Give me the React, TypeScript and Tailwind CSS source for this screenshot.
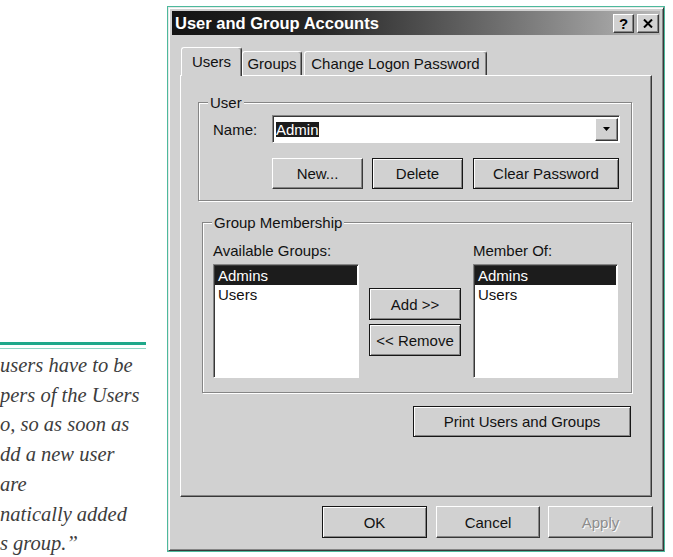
import type { ReactNode } from "react";

const raised =
  "border border-t-white border-l-white border-r-[#383838] border-b-[#383838] shadow-[inset_-1px_-1px_0_#858585]";
const framed =
  "border border-[#161616] shadow-[inset_1px_1px_0_#fff,inset_-1px_-1px_0_#858585]";
const sunken =
  "border border-t-[#858585] border-l-[#858585] border-r-white border-b-white shadow-[inset_1px_1px_0_#383838]";
const etched = "border border-[#858585] shadow-[inset_1px_1px_0_#fff,1px_1px_0_#fff]";

const quote = [
  "users have to be",
  "pers of the Users",
  "o, so as soon as",
  "dd a new user",
  "are",
  "natically added",
  "s group.\u201d",
];

function Button({
  children,
  dark,
  disabled,
  className = "",
}: {
  children: ReactNode;
  dark?: boolean;
  disabled?: boolean;
  className?: string;
}) {
  return (
    <button
      type="button"
      className={`flex shrink-0 items-center justify-center bg-[#d1d1d1] text-[15px] leading-[17px] ${
        dark ? framed : raised
      } ${disabled ? "text-[#8d8d8d] [text-shadow:1px_1px_0_#fff]" : "text-[#111]"} ${className}`}
    >
      {children}
    </button>
  );
}

function GroupBox({ label, className = "", children }: { label: string; className?: string; children: ReactNode }) {
  return (
    <div className={`relative shrink-0 ${etched} ${className}`}>
      <span className="absolute -top-[9px] left-[9px] bg-[#d1d1d1] px-[2px] leading-[17px]">{label}</span>
      {children}
    </div>
  );
}

function ListBox({ className = "" }: { className?: string }) {
  return (
    <div className={`h-[114px] bg-white p-px ${sunken} ${className}`}>
      <div className="h-[19px] bg-[#1c1c1c] pl-[3px] leading-[19px] text-white">Admins</div>
      <div className="h-[19px] pl-[3px] leading-[19px]">Users</div>
    </div>
  );
}

export default function App() {
  return (
    <div className="flex h-[557px] w-[673px] overflow-hidden bg-white font-['Liberation_Sans',Arial,sans-serif]">
      {/* side quote */}
      <div className="w-[167px] shrink-0 overflow-hidden pt-[342px]">
        <div className="h-[3px] w-[146px] bg-[#1fa88a]" />
        <div className="mt-[3px] h-px w-[146px] bg-[#8fd7c5]" />
        <div className="mt-[2px] whitespace-nowrap font-['Liberation_Serif',serif] text-[20.5px] leading-[29.7px] italic text-[#3d3d3d]">
          {quote.map((line) => (
            <div key={line}>{line}</div>
          ))}
        </div>
      </div>

      {/* dialog */}
      <div className="mt-[6px] h-[546px] w-[498px] shrink-0 border border-[#4db99c]">
        <div className="flex h-full flex-col border border-t-[#e9e9e9] border-l-[#e9e9e9] border-r-[#383838] border-b-[#383838] bg-[#d1d1d1] p-[3px] text-[15px] leading-[17px] text-[#111] shadow-[inset_1px_1px_0_#fff,inset_-1px_-1px_0_#858585]">
          {/* title bar */}
          <div className="flex h-[24px] shrink-0 items-center bg-linear-to-r from-[#141414] via-[#262626] via-30% to-[#b8b8b8] pl-[3px] pr-[1px]">
            <span className="text-[16.5px] font-bold leading-none text-white">User and Group Accounts</span>
            <div className="ml-auto flex gap-[3px]">
              <div className={`flex h-[19px] w-[21px] items-center justify-center bg-[#d1d1d1] ${raised}`}>
                <span className="text-[15px] font-bold leading-none text-black">?</span>
              </div>
              <div className={`flex h-[19px] w-[22px] items-center justify-center bg-[#d1d1d1] ${raised}`}>
                <svg width="10" height="9" viewBox="0 0 10 9">
                  <path d="M1 0.5 L9 8.5 M9 0.5 L1 8.5" stroke="#000" strokeWidth="2" />
                </svg>
              </div>
            </div>
          </div>

          <div className="mt-3 flex flex-col px-2">
            {/* tabs */}
            <div className="relative z-10 flex h-[28px] items-end pl-px">
              <div className="-mb-px flex h-[29px] w-[61px] items-center justify-center rounded-t-[3px] border border-b-0 border-t-white border-l-white border-r-[#383838] bg-[#d1d1d1] pb-[2px] shadow-[inset_-1px_0_0_#858585]">
                Users
              </div>
              <div className="flex h-[24px] w-[60px] items-center justify-center rounded-t-[3px] border border-b-0 border-t-white border-l-white border-r-[#383838] shadow-[inset_-1px_0_0_#858585]">
                Groups
              </div>
              <div className="ml-[2px] flex h-[24px] w-[183px] items-center justify-center rounded-t-[3px] border border-b-0 border-t-white border-l-white border-r-[#383838] shadow-[inset_-1px_0_0_#858585]">
                Change Logon Password
              </div>
            </div>

            {/* panel */}
            <div className={`flex h-[422px] flex-col ${raised}`}>
              <GroupBox label="User" className="ml-[17px] mt-[26px] h-[99px] w-[434px] pl-[14px] pt-[12px]">
                <div className="flex items-center">
                  <span className="w-[59px]">Name:</span>
                  <div className={`flex h-[28px] w-[348px] items-center bg-white p-px ${sunken}`}>
                    <span className="ml-[2px] bg-[#1c1c1c] leading-[15px] text-white">Admin</span>
                    <div className={`ml-auto flex h-[23px] w-[23px] items-center justify-center bg-[#d1d1d1] ${raised}`}>
                      <svg width="7" height="4" viewBox="0 0 7 4">
                        <path d="M0 0h7L3.5 4z" fill="#000" />
                      </svg>
                    </div>
                  </div>
                </div>
                <div className="ml-[59px] mt-[15px] flex">
                  <Button className="h-[31px] w-[91px]">New...</Button>
                  <Button dark className="ml-[9px] h-[31px] w-[91px]">Delete</Button>
                  <Button dark className="ml-[10px] h-[31px] w-[146px]">Clear Password</Button>
                </div>
              </GroupBox>

              <GroupBox label="Group Membership" className="ml-[21px] mt-[21px] h-[171px] w-[430px] pl-[10px] pt-[19px]">
                <div className="flex">
                  <div className="w-[146px]">
                    <div>Available Groups:</div>
                    <ListBox className="mt-[5px]" />
                  </div>
                  <div className="ml-[10px] mt-[46px] flex w-[92px] flex-col gap-[4px]">
                    <Button dark className="h-[32px] w-[92px]">Add &gt;&gt;</Button>
                    <Button dark className="h-[32px] w-[92px]">&lt;&lt; Remove</Button>
                  </div>
                  <div className="ml-[12px] w-[145px]">
                    <div>Member Of:</div>
                    <ListBox className="mt-[5px]" />
                  </div>
                </div>
              </GroupBox>

              <div className="mt-[13px] flex justify-end pr-[20px]">
                <Button dark className="h-[31px] w-[218px]">Print Users and Groups</Button>
              </div>
            </div>

            {/* dialog buttons */}
            <div className="-mr-px mt-[9px] flex justify-end">
              <Button dark className="h-[32px] w-[105px]">OK</Button>
              <Button className="ml-[9px] h-[32px] w-[104px]">Cancel</Button>
              <Button disabled className="ml-[8px] h-[32px] w-[105px]">Apply</Button>
            </div>
          </div>
        </div>
      </div>
    </div>
  );
}
